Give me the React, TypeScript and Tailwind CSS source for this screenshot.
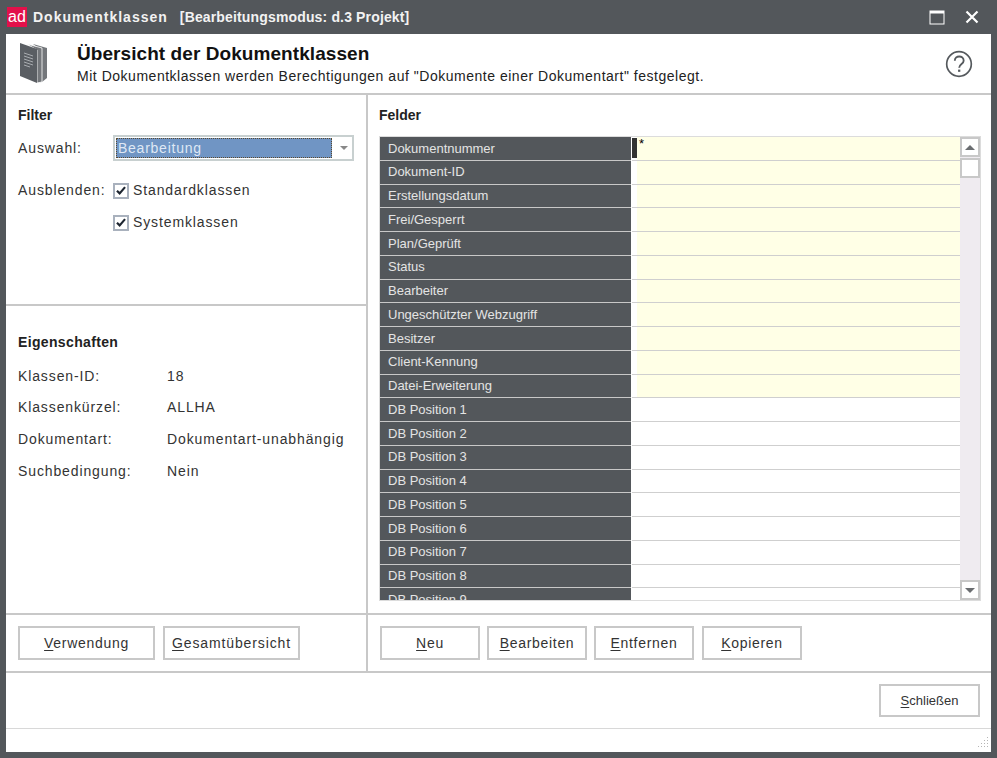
const fields = [
  "Dokumentnummer",
  "Dokument-ID",
  "Erstellungsdatum",
  "Frei/Gesperrt",
  "Plan/Geprüft",
  "Status",
  "Bearbeiter",
  "Ungeschützter Webzugriff",
  "Besitzer",
  "Client-Kennung",
  "Datei-Erweiterung",
  "DB Position 1",
  "DB Position 2",
  "DB Position 3",
  "DB Position 4",
  "DB Position 5",
  "DB Position 6",
  "DB Position 7",
  "DB Position 8",
  "DB Position 9",
];

const props = [
  ["Klassen-ID:", "18"],
  ["Klassenkürzel:", "ALLHA"],
  ["Dokumentart:", "Dokumentart-unabhängig"],
  ["Suchbedingung:", "Nein"],
];

function Btn({ hot, rest, className }: { hot: string; rest: string; className: string }) {
  return (
    <button className={`h-[34px] border-2 border-[#c8c8c8] bg-white text-[14px] tracking-[0.7px] text-[#333] ${className}`}>
      <span className="underline underline-offset-2">{hot}</span>
      {rest}
    </button>
  );
}

function Check({ label }: { label: string }) {
  return (
    <div className="flex h-[17px] items-center gap-[4px]">
      <span className="flex h-[16px] w-[16px] items-center justify-center border-2 border-[#a9b1bd] bg-white">
        <svg width="10" height="9" viewBox="0 0 11 10">
          <path d="M1 5.2 L4 8.2 L10 1.2" fill="none" stroke="#1d2530" strokeWidth="2.4" />
        </svg>
      </span>
      <span>{label}</span>
    </div>
  );
}

export default function App() {
  return (
    <div className="flex h-[758px] w-[997px] flex-col overflow-hidden bg-[#53575b] px-[6px] pb-[6px] font-['Liberation_Sans',Arial,sans-serif] text-[14px] tracking-[0.88px] text-[#333]">
      {/* Title bar */}
      <div className="flex h-[34px] shrink-0 items-center tracking-normal text-white">
        <div className="ml-px flex h-[20px] w-[20px] items-center justify-center bg-[#e2104a] text-[16px] leading-none">
          ad
        </div>
        <div className="ml-[6px] whitespace-pre text-[14px] font-bold text-[#f2f2f2]">
          <span className="tracking-[1px]">Dokumentklassen</span>
          <span className="ml-[12px] tracking-[0.15px]">[Bearbeitungsmodus: d.3 Projekt]</span>
        </div>
        <svg className="ml-auto mr-[20px]" width="16" height="16" viewBox="0 0 16 16">
          <rect x="1" y="2" width="14" height="13" fill="none" stroke="#fff" strokeWidth="1" />
          <rect x="1" y="2" width="14" height="2.5" fill="#fff" />
        </svg>
        <svg className="mr-[12px]" width="14" height="14" viewBox="0 0 14 14">
          <path d="M1.5 1.5 L12.5 12.5 M12.5 1.5 L1.5 12.5" stroke="#fff" strokeWidth="2.2" />
        </svg>
      </div>

      <div className="flex min-h-0 flex-1 flex-col bg-white">
        {/* Header */}
        <div className="flex h-[61px] shrink-0 items-start border-b-2 border-[#c8c8c8]">
          <svg className="ml-[14px] mt-[9px]" width="27" height="41" viewBox="0 0 27 41">
            <path d="M13 1 L27 5 V35 L22 39 V8 Z" fill="#74777b" />
            <path d="M7 1 L22 5 V39 L17 40 V7 Z" fill="#74777b" stroke="#fff" strokeWidth="0.8" />
            <path d="M0 0 L17 6 V40 L0 33 Z" fill="#5a5e63" />
            <path d="M4 10 L13 13 M4 13 L13 16 M4 16 L13 19 M4 19 L13 22 M4 22 L10 24" stroke="#a9acb0" strokeWidth="1" />
          </svg>
          <div className="ml-[30px] mt-[9px] tracking-normal">
            <div className="text-[19px] font-bold leading-[21px] tracking-[0.07px] text-[#111]">Übersicht der Dokumentklassen</div>
            <div className="mt-[5px] text-[14px] leading-[14px] tracking-[0.52px] text-[#222]">
              Mit Dokumentklassen werden Berechtigungen auf "Dokumente einer Dokumentart" festgelegt.
            </div>
          </div>
          <svg className="ml-auto mr-[18px] mt-[16px]" width="28" height="28" viewBox="0 0 30 30">
            <circle cx="15" cy="15" r="13.2" fill="none" stroke="#55595d" strokeWidth="1.8" />
            <path d="M10.5 11.5 C10.5 5.5 20 5.5 20 11.5 C20 15 15.2 15 15.2 19" fill="none" stroke="#55595d" strokeWidth="2" />
            <rect x="14" y="21" width="2.4" height="2.4" fill="#55595d" />
          </svg>
        </div>

        {/* Panels */}
        <div className="flex min-h-0 flex-1 border-b-2 border-[#c8c8c8]">
          <div className="flex w-[362px] shrink-0 flex-col border-r-2 border-[#c8c8c8]">
            <div className="h-[211px] shrink-0 border-b-2 border-[#c8c8c8] pl-[12px] pt-[12px]">
              <div className="font-bold leading-[16px] tracking-normal text-[#222]">Filter</div>
              <div className="mt-[12px] flex items-center">
                <span className="w-[95px]">Auswahl:</span>
                <div className="flex h-[26px] w-[241px] items-center border-2 border-[#c8d0d0] bg-white pl-[1px]">
                  <div className="flex h-[20px] w-[216px] items-center border border-dotted border-[#5a4a30] bg-[#7095c4] pl-[1px] tracking-[0.75px] text-[#dfe8f5]">
                    Bearbeitung
                  </div>
                  <span className="ml-[8px] h-0 w-0 border-x-[4px] border-t-[4px] border-x-transparent border-t-[#888]" />
                </div>
              </div>
              <div className="mt-[19px] flex">
                <span className="w-[95px]">Ausblenden:</span>
                <div className="mt-[2px] flex flex-col gap-[15px]">
                  <Check label="Standardklassen" />
                  <Check label="Systemklassen" />
                </div>
              </div>
            </div>
            <div className="min-h-0 flex-1 pl-[12px] pt-[28px]">
              <div className="font-bold leading-[16px] tracking-[0.35px] text-[#222]">Eigenschaften</div>
              <div className="mt-[18px] flex flex-col gap-[15.7px]">
                {props.map(([k, v]) => (
                  <div key={k} className="flex h-[16px] items-center">
                    <span className="w-[149px]">{k}</span>
                    <span>{v}</span>
                  </div>
                ))}
              </div>
            </div>
          </div>

          <div className="flex min-w-0 flex-1 flex-col pl-[11px] pr-[10px] pt-[12px]">
            <div className="font-bold leading-[16px] tracking-normal text-[#222]">Felder</div>
            <div className="mt-[13px] flex h-[465px] border border-[#dcdcdc] text-[13px] tracking-normal">
              <div className="min-w-0 flex-1 overflow-hidden">
                {fields.map((f, i) => (
                  <div key={f} className="flex h-[23.75px] shrink-0">
                    <div className="flex w-[251px] shrink-0 items-center border-b border-[#c8c8c8] bg-[#53575b] pl-[8px] text-[#e4e4e4]">
                      {f}
                    </div>
                    <div className="ml-[1px] flex min-w-0 flex-1 border-b-[1.5px] border-[#cfcfcf]">
                      {i === 0 ? (
                        <div className="mt-[1px] h-[20px] w-[5px] bg-[#333]" />
                      ) : (
                        <div className="w-[5px]" />
                      )}
                      <div className={`flex-1 pl-[2px] leading-[14px] text-black ${i < 11 ? "bg-[#ffffe6]" : "bg-white"}`}>
                        {i === 0 ? "*" : ""}
                      </div>
                    </div>
                  </div>
                ))}
              </div>
              {/* Scrollbar */}
              <div className="flex w-[20px] shrink-0 flex-col bg-[#efebf0]">
                <div className="flex h-[20px] shrink-0 items-center justify-center border-2 border-[#c8c8c8] bg-white">
                  <span className="h-0 w-0 border-x-[5px] border-b-[5px] border-x-transparent border-b-[#6a6d70]" />
                </div>
                <div className="mt-px h-[20px] shrink-0 border-2 border-[#c8c8c8] bg-white" />
                <div className="flex-1" />
                <div className="flex h-[20px] shrink-0 items-center justify-center border-2 border-[#c8c8c8] bg-white">
                  <span className="h-0 w-0 border-x-[5px] border-t-[5px] border-x-transparent border-t-[#6a6d70]" />
                </div>
              </div>
            </div>
          </div>
        </div>

        {/* Panel buttons */}
        <div className="flex h-[58px] shrink-0 border-b-2 border-[#c8c8c8]">
          <div className="flex w-[362px] shrink-0 items-center gap-[8px] border-r-2 border-[#c8c8c8] pl-[12px]">
            <Btn hot="V" rest="erwendung" className="w-[137px]" />
            <Btn hot="G" rest="esamtübersicht" className="w-[137px] tracking-[0.87px]" />
          </div>
          <div className="flex flex-1 items-center gap-[7px] pl-[12px]">
            <Btn hot="N" rest="eu" className="w-[100px]" />
            <Btn hot="B" rest="earbeiten" className="w-[100px]" />
            <Btn hot="E" rest="ntfernen" className="w-[100px]" />
            <Btn hot="K" rest="opieren" className="ml-px w-[100px]" />
          </div>
        </div>

        {/* Close row */}
        <div className="flex h-[56px] shrink-0 items-center justify-end border-b border-[#d8d8d8] pr-[11px]">
          <button className="h-[33px] w-[101px] border-2 border-[#c8c8c8] bg-white text-[13px] tracking-normal text-[#333]">
            <span className="underline underline-offset-2">S</span>chließen
          </button>
        </div>

        {/* Status bar */}
        <div className="flex h-[23px] shrink-0 items-end justify-end pb-[4px] pr-[2px]">
          <svg width="12" height="12" viewBox="0 0 12 12">
            <path d="M10 1h1v1h-1z M10 4h1v1h-1z M7 4h1v1h-1z M10 7h1v1h-1z M7 7h1v1h-1z M4 7h1v1h-1z M10 10h1v1h-1z M7 10h1v1h-1z M4 10h1v1h-1z M1 10h1v1h-1z" fill="#b5b5b5" />
          </svg>
        </div>
      </div>
    </div>
  );
}
